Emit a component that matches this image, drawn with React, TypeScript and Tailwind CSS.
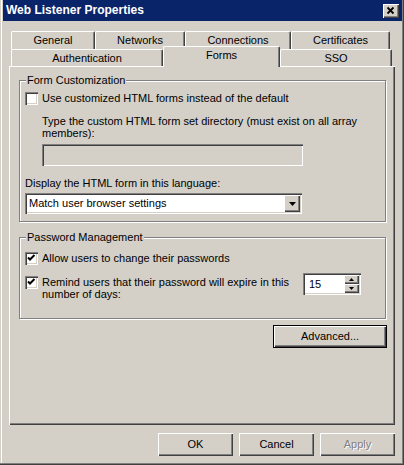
import type { ReactNode } from "react";

const raised =
  "bg-[#d4d0c8] shadow-[inset_1px_1px_0_#fff,inset_-1px_-1px_0_#404040,inset_-2px_-2px_0_#808080]";
const sunken =
  "shadow-[inset_1px_1px_0_#808080,inset_2px_2px_0_#404040,inset_-1px_-1px_0_#fff,inset_-2px_-2px_0_#d4d0c8]";

const Checkbox = ({ checked }: { checked?: boolean }) => (
  <div className={`w-[13px] h-[13px] shrink-0 bg-white flex items-center justify-center ${sunken}`}>
    {checked && (
      <svg width="13" height="13" viewBox="0 0 13 13">
        <polyline points="3,5.5 5,7.5 9.5,3" fill="none" stroke="#000" strokeWidth="2" />
      </svg>
    )}
  </div>
);

const GroupBox = ({ title, className, children }: { title: string; className: string; children: ReactNode }) => (
  <div
    className={`relative w-[367px] border border-[#808080] shadow-[inset_1px_1px_0_#fff,1px_1px_0_#fff] ${className}`}
  >
    <span className="absolute left-[6px] -top-[7px] px-[1px] bg-[#d4d0c8] leading-[13px]">{title}</span>
    {children}
  </div>
);

const Button = ({ label, disabled, isDefault, className = "" }: { label: string; disabled?: boolean; isDefault?: boolean; className?: string }) => (
  <div
    className={`h-[23px] flex items-center justify-center ${raised} ${isDefault ? "border border-black" : ""} ${
      disabled ? "text-[#808080] [text-shadow:1px_1px_0_#fff]" : ""
    } ${className}`}
  >
    {label}
  </div>
);

const Tab = ({ label, className }: { label: string; className: string }) => (
  <div
    className={`flex items-center justify-center bg-[#d4d0c8] border-t border-l border-white border-r border-r-[#404040] rounded-t-[2px] shadow-[inset_-1px_0_0_#808080] ${className}`}
  >
    {label}
  </div>
);

export default function App() {
  return (
    <div className="w-[404px] h-[465px] bg-[#d4d0c8] flex flex-col text-[11px] leading-[13px] text-black font-['Liberation_Sans',Arial,sans-serif] shadow-[inset_-1px_-1px_0_#404040,inset_-2px_-2px_0_#808080,inset_1px_0_0_#d4d0c8,inset_2px_0_0_#fff] overflow-hidden">
      {/* title bar */}
      <div className="ml-[3px] mr-[2px] h-[21px] shrink-0 bg-[#0a246a] flex items-center justify-between pl-[3px] pr-[3px]">
        <span className="text-white font-bold text-[12px]">Web Listener Properties</span>
        <div className={`w-[16px] h-[14px] flex items-center justify-center ${raised}`}>
          <svg width="16" height="14" viewBox="0 0 16 14">
            <path d="M4.5 3.5 L10.5 9.5 M10.5 3.5 L4.5 9.5" stroke="#000" strokeWidth="1.8" />
          </svg>
        </div>
      </div>

      <div className="flex flex-col px-[9px]">
        {/* back tab row */}
        <div className="mt-[10px] flex h-[18px] pl-[2px]">
          <Tab label="General" className="w-[84px]" />
          <Tab label="Networks" className="w-[90px]" />
          <Tab label="Connections" className="w-[106px]" />
          <Tab label="Certificates" className="w-[99px]" />
        </div>
        {/* front tab row */}
        <div className="flex items-start h-[17px] pl-[2px]">
          <Tab label="Authentication" className="w-[152px] h-[17px] pt-[1px]" />
          <div className="relative z-10 w-[117px] h-[21px] -mt-[3px] pb-[3px] flex items-center justify-center bg-[#d4d0c8] border-t border-l border-white border-r border-r-[#404040] rounded-t-[2px] shadow-[inset_-1px_0_0_#808080]">
            Forms
          </div>
          <Tab label="SSO" className="w-[112px] h-[17px] pt-[1px]" />
        </div>

        {/* panel */}
        <div className="h-[359px] flex flex-col pl-[10px] shadow-[inset_1px_1px_0_#fff,inset_-1px_-1px_0_#404040,inset_-2px_-2px_0_#808080]">
          <GroupBox title="Form Customization" className="mt-[14px] h-[142px] pl-[5px] pt-[11px] flex flex-col">
            <div className="flex items-center gap-[4px] h-[13px]">
              <Checkbox />
              <span>Use customized HTML forms instead of the default</span>
            </div>
            <div className="mt-[10px] pl-[17px] leading-[12px] whitespace-nowrap">
              Type the custom HTML form set directory (must exist on all array
              <br />
              members):
            </div>
            <div className={`mt-[5px] ml-[17px] w-[261px] h-[22px] bg-[#d4d0c8] ${sunken}`} />
            <div className="mt-[11px]">Display the HTML form in this language:</div>
            <div className={`mt-[3px] w-[277px] h-[21px] bg-white flex items-center justify-between pl-[4px] pr-[2px] ${sunken}`}>
              <span>Match user browser settings</span>
              <div className={`w-[16px] h-[17px] flex items-center justify-center ${raised}`}>
                <svg width="7" height="4" viewBox="0 0 7 4">
                  <polygon points="0,0 7,0 3.5,4" fill="#000" />
                </svg>
              </div>
            </div>
          </GroupBox>

          <GroupBox title="Password Management" className="mt-[15px] h-[82px] pl-[5px] pt-[14px] flex flex-col">
            <div className="flex items-center gap-[4px] h-[13px]">
              <Checkbox checked />
              <span>Allow users to change their passwords</span>
            </div>
            <div className="mt-[11px] flex items-start">
              <Checkbox checked />
              <div className="ml-[4px] w-[261px] leading-[12px] whitespace-nowrap">
                Remind users that their password will expire in this
                <br />
                number of days:
              </div>
              <div className={`-mt-[3px] w-[58px] h-[22px] bg-white flex items-center justify-between pl-[6px] pr-[2px] ${sunken}`}>
                <span>15</span>
                <div className="flex flex-col">
                  <div className={`w-[15px] h-[9px] flex items-center justify-center ${raised}`}>
                    <svg width="5" height="3" viewBox="0 0 5 3">
                      <polygon points="2.5,0 5,3 0,3" fill="#000" />
                    </svg>
                  </div>
                  <div className={`w-[15px] h-[9px] flex items-center justify-center ${raised}`}>
                    <svg width="5" height="3" viewBox="0 0 5 3">
                      <polygon points="0,0 5,0 2.5,3" fill="#000" />
                    </svg>
                  </div>
                </div>
              </div>
            </div>
          </GroupBox>

          <Button label="Advanced..." isDefault className="mt-[6px] ml-[254px] w-[114px]" />
        </div>

        {/* dialog buttons */}
        <div className="mt-[8px] flex justify-end gap-[6px]">
          <Button label="OK" className="w-[75px]" />
          <Button label="Cancel" className="w-[75px]" />
          <Button label="Apply" disabled className="w-[75px]" />
        </div>
      </div>
    </div>
  );
}
